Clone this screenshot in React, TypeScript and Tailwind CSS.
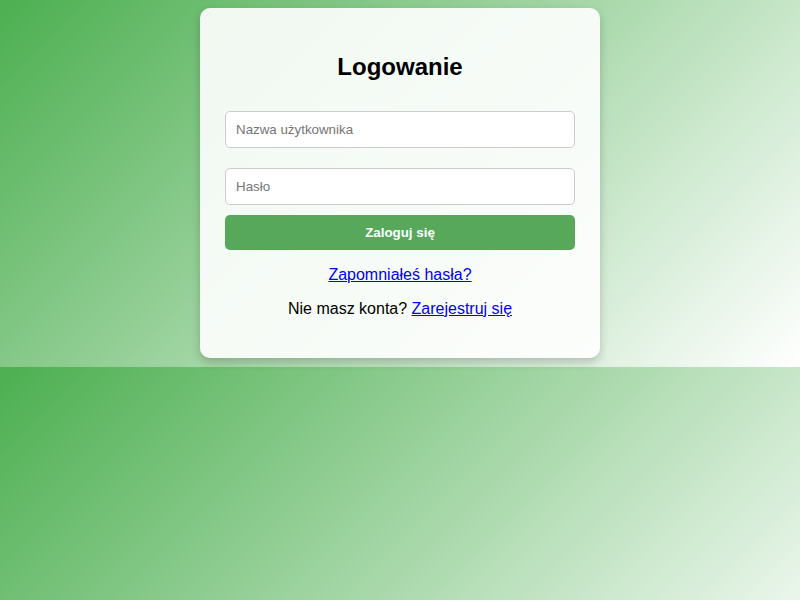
import React from 'react';

const App: React.FC = () => {
  return (
    <div className="min-h-screen w-full bg-[linear-gradient(135deg,#4caf50,#ffffff)] [background-size:100%_367px] bg-repeat font-['Liberation_Sans',Arial,sans-serif]">
      <div className="flex justify-center pt-2">
        {/* Login card */}
        <div className="w-[400px] rounded-[10px] bg-white/90 p-[25px] text-center shadow-[0_4px_10px_rgba(0,0,0,0.2)]">
          <h2 className="my-5 text-2xl leading-7 font-bold text-black">Logowanie</h2>

          <form className="flex flex-col" onSubmit={(e) => e.preventDefault()}>
            <input
              type="text"
              placeholder="Nazwa użytkownika"
              className="my-[10px] box-border h-[37px] w-full rounded-[5px] border border-[#ccc] bg-white px-[10px] text-[13.333px] text-black placeholder-[#757575] outline-none"
            />
            <input
              type="password"
              placeholder="Hasło"
              className="my-[10px] box-border h-[37px] w-full rounded-[5px] border border-[#ccc] bg-white px-[10px] text-[13.333px] text-black placeholder-[#757575] outline-none"
            />
            <button
              type="submit"
              className="h-[35px] w-full cursor-pointer rounded-[5px] bg-[#58a85b] text-[13.333px] font-bold text-white"
            >
              Zaloguj się
            </button>
          </form>

          <p className="mt-4 text-base leading-[18px]">
            <a href="#" className="text-[#0000ee] underline">Zapomniałeś hasła?</a>
          </p>
          <p className="mt-4 mb-[15px] text-base leading-[18px] text-black">
            Nie masz konta? <a href="#" className="text-[#0000ee] underline">Zarejestruj się</a>
          </p>
        </div>
      </div>
    </div>
  );
};

export default App;
